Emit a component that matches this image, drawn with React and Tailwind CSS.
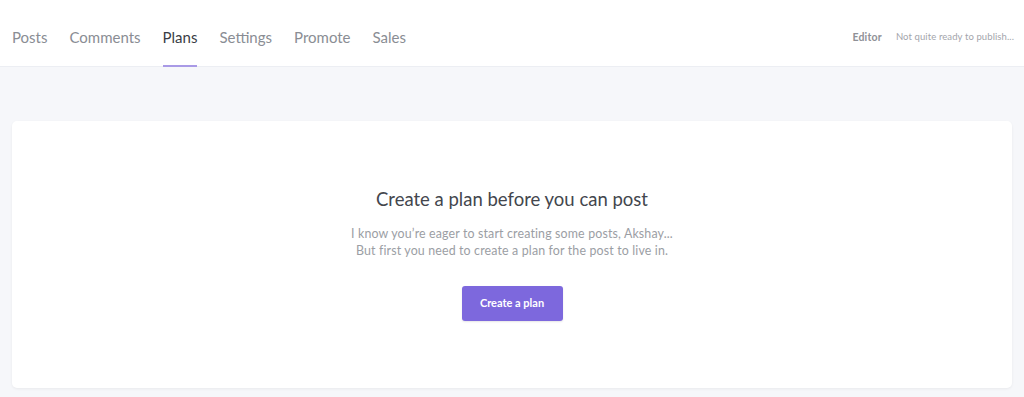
export default function App() {
  const tabs = ["Posts", "Comments", "Plans", "Settings", "Promote", "Sales"];
  return (
    <div className="w-[1024px] h-[397px] bg-[#f6f7fa] overflow-hidden" style={{ fontFamily: "Lato, 'Noto Sans', sans-serif" }}>
      <header className="h-[67px] bg-white border-b border-[#eceef3] flex items-stretch justify-between pl-[12px] pr-[10px]">
        <nav className="flex gap-[22px] items-stretch">
          {tabs.map((t) => (
            <div
              key={t}
              className={
                "relative flex items-center text-[15px] pt-[9px] " +
                (t === "Plans" ? "text-[#3a3d45]" : "text-[#8a8d94]")
              }
            >
              {t}
              {t === "Plans" && (
                <span className="absolute left-0 right-0 bottom-[-1px] h-[2px] bg-[#a99ae6]" />
              )}
            </div>
          ))}
        </nav>
        <div className="flex items-center gap-[14px] pt-[9px]">
          <span className="text-[10.5px] font-bold text-[#8f9197] tracking-[0.2px]">Editor</span>
          <span className="text-[9.5px] text-[#a3a5ab] tracking-[0.1px]">Not quite ready to publish...</span>
        </div>
      </header>
      <main className="px-[12px] pt-[54px]">
        <div className="h-[267px] bg-white rounded-[5px] shadow-[0_1px_3px_rgba(0,0,0,0.06)] flex flex-col items-center pt-[65px]">
          <h1 className="text-[18.5px] text-[#43464d] leading-[26px]">Create a plan before you can post</h1>
          <p className="mt-[13px] text-[12.4px] leading-[17px] text-[#9b9ea4] text-center tracking-[0.15px]">
            I know you’re eager to start creating some posts, Akshay...
            <br />
            But first you need to create a plan for the post to live in.
          </p>
          <button className="mt-[27px] w-[101px] h-[35px] rounded-[3px] bg-[#7d68dd] text-white text-[11px] font-bold shadow-[0_1px_2px_rgba(0,0,0,0.1)]">
            Create a plan
          </button>
        </div>
      </main>
    </div>
  );
}
